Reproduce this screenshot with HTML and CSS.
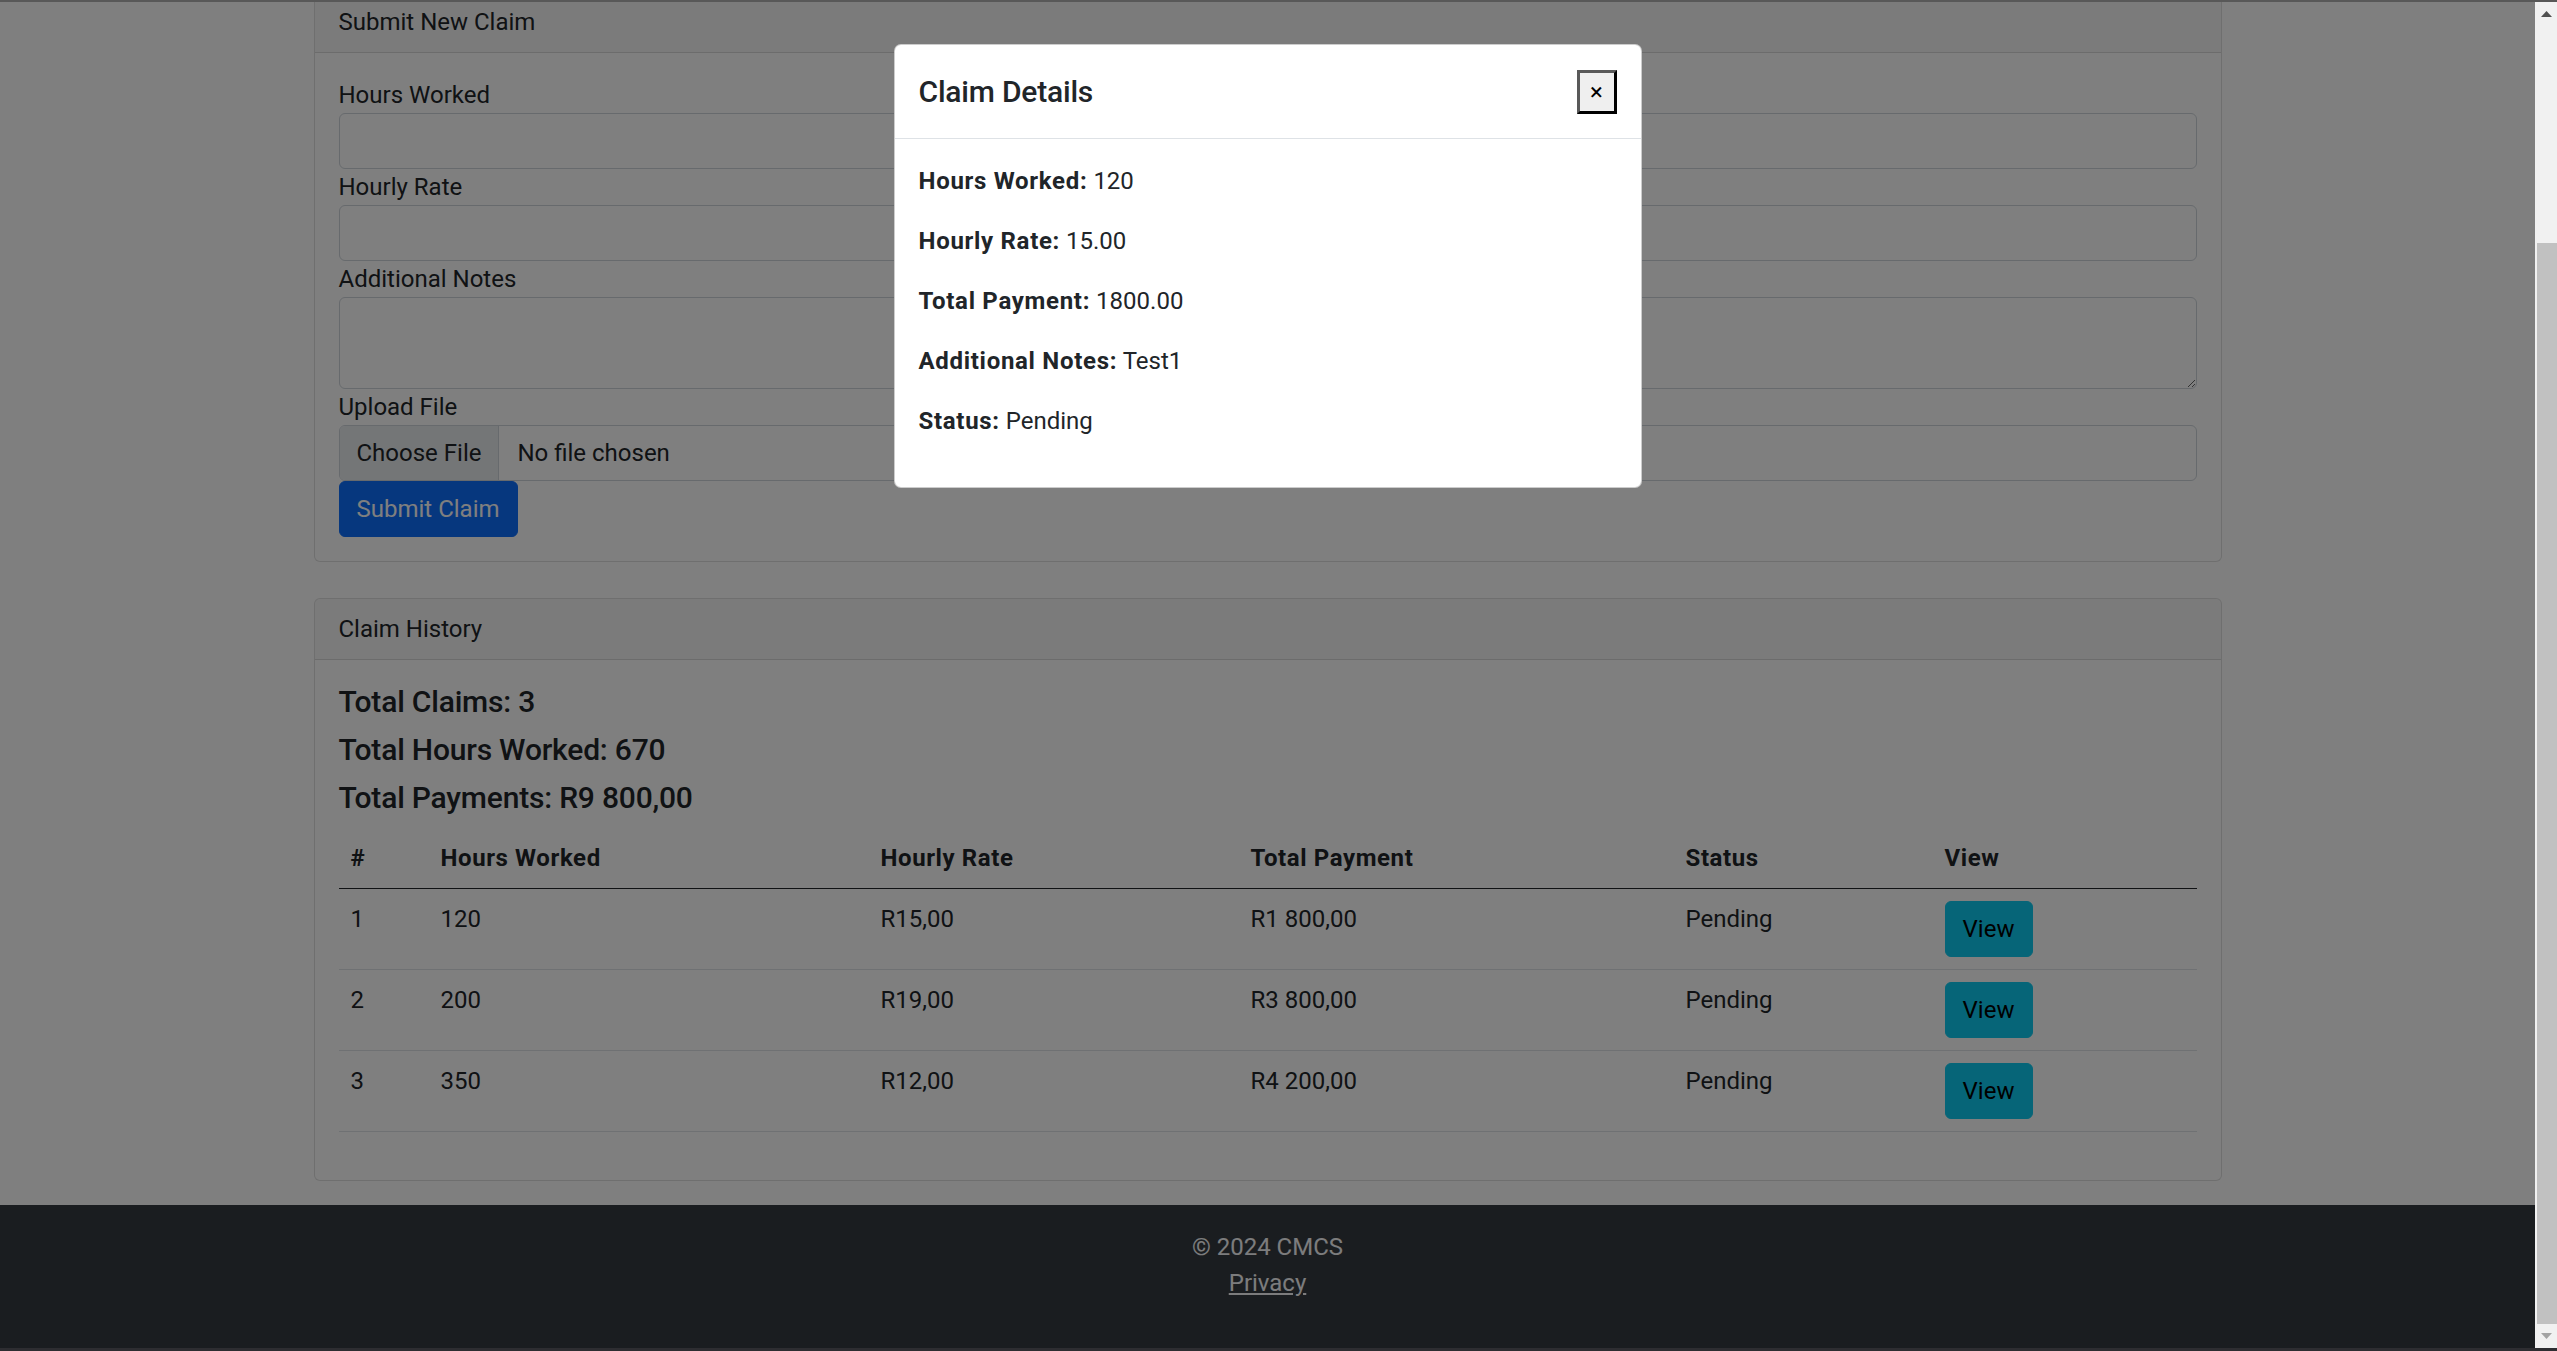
FILE: index.html
```html
<!DOCTYPE html>
<html lang="en">
<head>
<meta charset="utf-8">
<title>Claims - CMCS</title>
<link rel="stylesheet" href="styles.css">
</head>
<body>
<div class="frame-top"></div>
<div class="window">
  <div class="viewport">
    <div class="page">
      <main class="container">
        <section class="card">
          <div class="card-header">Submit New Claim</div>
          <div class="card-body">
            <form class="claim-form">
              <div class="form-group">
                <label class="form-label" for="hours">Hours Worked</label>
                <input class="form-control" id="hours" type="text">
              </div>
              <div class="form-group">
                <label class="form-label" for="rate">Hourly Rate</label>
                <input class="form-control" id="rate" type="text">
              </div>
              <div class="form-group">
                <label class="form-label" for="notes">Additional Notes</label>
                <textarea class="form-control form-textarea" id="notes" rows="2"></textarea>
              </div>
              <div class="form-group">
                <label class="form-label" for="file">Upload File</label>
                <div class="form-control file-input" id="file">
                  <span class="file-btn">Choose File</span>
                  <span class="file-name">No file chosen</span>
                </div>
              </div>
              <button class="btn btn-primary" type="button">Submit Claim</button>
            </form>
          </div>
        </section>

        <section class="card">
          <div class="card-header">Claim History</div>
          <div class="card-body">
            <h5 class="total">Total Claims: 3</h5>
            <h5 class="total">Total Hours Worked: 670</h5>
            <h5 class="total">Total Payments: R9 800,00</h5>
            <table class="table">
              <colgroup>
                <col class="col-num">
                <col class="col-hours">
                <col class="col-rate">
                <col class="col-total">
                <col class="col-status">
                <col class="col-view">
              </colgroup>
              <thead>
                <tr>
                  <th>#</th>
                  <th>Hours Worked</th>
                  <th>Hourly Rate</th>
                  <th>Total Payment</th>
                  <th>Status</th>
                  <th>View</th>
                </tr>
              </thead>
              <tbody>
                <tr>
                  <td>1</td>
                  <td>120</td>
                  <td>R15,00</td>
                  <td>R1 800,00</td>
                  <td>Pending</td>
                  <td><button class="btn btn-info" type="button">View</button></td>
                </tr>
                <tr>
                  <td>2</td>
                  <td>200</td>
                  <td>R19,00</td>
                  <td>R3 800,00</td>
                  <td>Pending</td>
                  <td><button class="btn btn-info" type="button">View</button></td>
                </tr>
                <tr>
                  <td>3</td>
                  <td>350</td>
                  <td>R12,00</td>
                  <td>R4 200,00</td>
                  <td>Pending</td>
                  <td><button class="btn btn-info" type="button">View</button></td>
                </tr>
              </tbody>
            </table>
          </div>
        </section>
      </main>

      <footer class="site-footer">
        <p>&copy; 2024 CMCS<br><a href="#">Privacy</a></p>
      </footer>
    </div>

    <div class="backdrop"></div>

    <div class="modal" role="dialog" aria-labelledby="claimTitle">
      <div class="modal-dialog">
        <div class="modal-content">
          <div class="modal-header">
            <h5 class="modal-title" id="claimTitle">Claim Details</h5>
            <button class="modal-close" type="button" aria-label="Close">&times;</button>
          </div>
          <div class="modal-body">
            <p><strong>Hours Worked:</strong> 120</p>
            <p><strong>Hourly Rate:</strong> 15.00</p>
            <p><strong>Total Payment:</strong> 1800.00</p>
            <p><strong>Additional Notes:</strong> Test1</p>
            <p><strong>Status:</strong> Pending</p>
          </div>
        </div>
      </div>
    </div>
  </div>

  <div class="scrollbar" aria-hidden="true">
    <div class="sb-btn">
      <svg class="sb-arrow" width="11" height="6" viewBox="0 0 11 6"><polygon points="0,6 5.5,0 11,6" fill="#505050"/></svg>
    </div>
    <div class="sb-track"><div class="sb-thumb"></div></div>
    <div class="sb-btn">
      <svg class="sb-arrow" width="11" height="6" viewBox="0 0 11 6"><polygon points="0,0 11,0 5.5,6" fill="#a3a3a3"/></svg>
    </div>
  </div>
</div>
<div class="frame-bottom"></div>
</body>
</html>
```

FILE: styles.css
```css
* {
  box-sizing: border-box;
}

html,
body {
  margin: 0;
  height: 1351px;
  overflow: hidden;
}

body {
  display: flex;
  flex-direction: column;
  font-family: Roboto, "Liberation Sans", Arial, sans-serif;
  font-size: 24px;
  line-height: 1.5;
  color: #212529;
  background: #fff;
}

.frame-top {
  flex-shrink: 0;
  height: 2px;
  background: #585858;
}

.frame-bottom {
  flex-shrink: 0;
  height: 3px;
  background: #2d2d31;
}

.window {
  flex: 1;
  min-height: 0;
  display: flex;
}

/* page viewport, scrolled to the bottom */
.viewport {
  flex: 1;
  position: relative;
  overflow: hidden;
  display: flex;
  flex-direction: column;
  justify-content: flex-end;
  background: #fff;
}

.page {
  flex-shrink: 0;
}

.container {
  width: 1908px;
  margin: 0 auto;
  padding-bottom: 24px;
}

/* cards */
.card {
  background: #fff;
  border: 1px solid rgba(0, 0, 0, 0.125);
  border-radius: 6px;
}

.card + .card {
  margin-top: 36px;
}

.card-header {
  padding: 12px 24px;
  background: rgba(0, 0, 0, 0.03);
  border-bottom: 1px solid rgba(0, 0, 0, 0.125);
  border-radius: 5px 5px 0 0;
}

.card-body {
  padding: 24px;
}

/* form */
.form-label {
  display: block;
}

.form-control {
  display: block;
  width: 100%;
  height: 56px;
  margin: 0;
  padding: 9px 18px;
  font: inherit;
  line-height: 36px;
  color: #212529;
  background: #fff;
  border: 1px solid #ced4da;
  border-radius: 6px;
}

.form-textarea {
  height: 92px;
  resize: vertical;
}

.file-input {
  display: flex;
  align-items: stretch;
  padding: 0;
  overflow: hidden;
}

.file-btn {
  padding: 9px 17px;
  background: #e9ecef;
  border-right: 1px solid #ced4da;
  margin-right: 18px;
}

.file-name {
  padding: 9px 0;
}

.btn {
  display: inline-block;
  margin: 0;
  padding: 9px 18px;
  font: inherit;
  line-height: 36px;
  border: 1px solid transparent;
  border-radius: 6px;
  vertical-align: middle;
}

.btn-primary {
  color: #fff;
  background: #0d6efd;
  border-color: #0d6efd;
}

.btn-info {
  color: #000;
  background: #0dcaf0;
  border-color: #0dcaf0;
}

.claim-form .btn {
  display: block;
  padding-left: 17px;
  padding-right: 17px;
}

/* totals */
.total {
  margin: 0 0 12px;
  font-size: 30px;
  font-weight: 500;
  letter-spacing: -0.2px;
  line-height: 1.2;
}

/* table */
.table {
  width: 100%;
  margin-bottom: 24px;
  border-collapse: collapse;
  table-layout: fixed;
  color: #212529;
}

.col-num { width: 90px; }
.col-hours { width: 440px; }
.col-rate { width: 370px; }
.col-total { width: 435px; }
.col-status { width: 259px; }
.col-view { width: 264px; }

.table th,
.table td {
  padding: 12px;
  text-align: left;
  vertical-align: top;
  border-bottom: 1px solid #dee2e6;
}

.table thead th {
  font-weight: 700;
  letter-spacing: 0.6px;
  border-bottom-color: #212529;
}

.table td .btn {
  display: block;
  width: 88px;
  text-align: center;
  padding-left: 0;
  padding-right: 0;
}

/* footer */
.site-footer {
  padding: 24px 0 23px;
  background: #343a40;
  color: #f8f9fa;
  text-align: center;
}

.site-footer p {
  margin: 0 0 24px;
}

.site-footer a {
  color: inherit;
  text-decoration: underline;
}

/* modal */
.backdrop {
  position: absolute;
  inset: 0;
  background: rgba(0, 0, 0, 0.5);
}

.modal {
  position: absolute;
  inset: 0;
}

.modal-dialog {
  width: 748px;
  margin: 42px auto 0;
}

.modal-content {
  background: #fff;
  border: 1px solid rgba(0, 0, 0, 0.2);
  border-radius: 7px;
}

.modal-header {
  display: flex;
  align-items: center;
  justify-content: space-between;
  padding: 24px;
  border-bottom: 1px solid #dee2e6;
}

.modal-title {
  margin: 0;
  font-size: 30px;
  font-weight: 500;
  letter-spacing: -0.2px;
  line-height: 1.5;
}

.modal-close {
  width: 40px;
  height: 44px;
  margin: 0;
  padding: 0;
  font-family: inherit;
  font-size: 24px;
  line-height: 36px;
  color: #000;
  background: #efefef;
  border-style: solid;
  border-width: 3px;
  border-color: #595959 #000 #000 #595959;
  border-radius: 0;
}

.modal-body {
  padding: 24px;
}

.modal-body p {
  margin: 0 0 24px;
}

.modal-body strong {
  font-weight: 700;
  letter-spacing: 0.7px;
}

/* window scrollbar */
.scrollbar {
  flex-shrink: 0;
  width: 22px;
  display: flex;
  flex-direction: column;
  background: #f1f1f1;
}

.sb-btn {
  height: 24px;
  flex-shrink: 0;
  display: flex;
  align-items: center;
  justify-content: center;
}

.sb-arrow {
  display: block;
}

.sb-track {
  flex: 1;
  display: flex;
  flex-direction: column;
  justify-content: flex-end;
  padding-left: 2px;
}

.sb-thumb {
  height: 1081px;
  background: #c1c1c1;
}
```
